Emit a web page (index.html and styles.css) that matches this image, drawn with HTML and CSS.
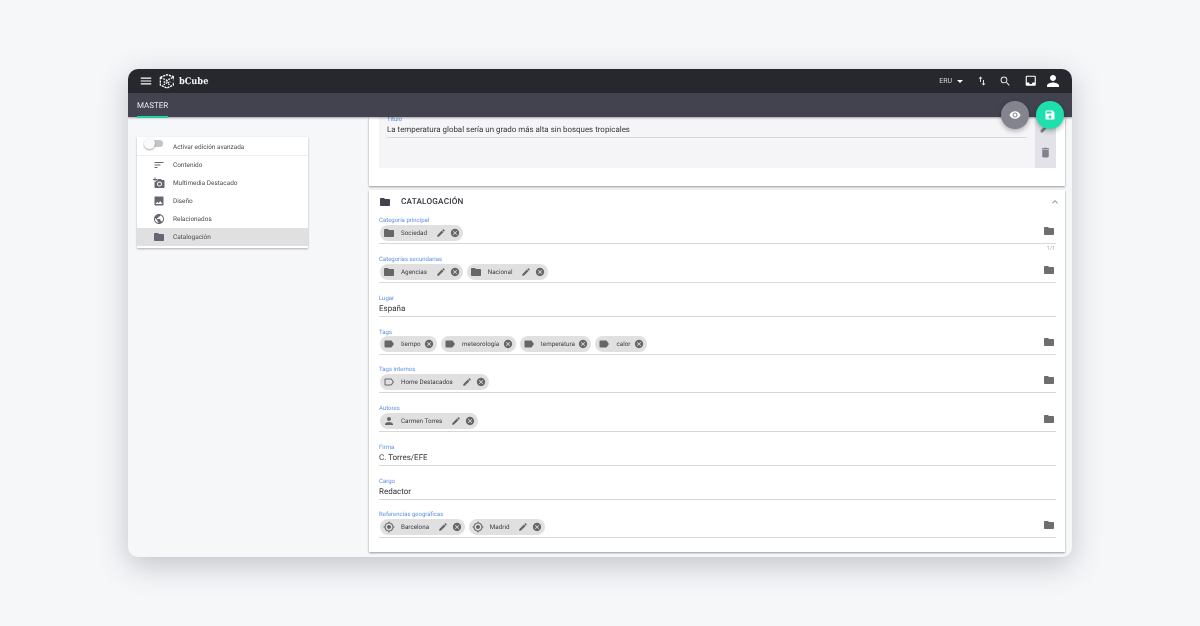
FILE: index.html
```html
<!DOCTYPE html>
<html lang="es">
<head>
    <meta charset="UTF-8">
    <meta name="viewport" content="width=device-width, initial-scale=1.0">
    <title>bCube</title>
    <link rel="stylesheet" href="styles.css">
</head>
<body>
    <svg class="defs" width="0" height="0">
        <symbol id="i-folder" viewBox="0 0 24 24"><path d="M10 4H4c-1.1 0-2 .9-2 2v12c0 1.1.9 2 2 2h16c1.1 0 2-.9 2-2V8c0-1.1-.9-2-2-2h-8l-2-2z"/></symbol>
        <symbol id="i-edit" viewBox="0 0 24 24"><path d="M3 17.25V21h3.75L17.81 9.94l-3.75-3.75L3 17.25zM20.71 7.04a1 1 0 0 0 0-1.41l-2.34-2.34a1 1 0 0 0-1.41 0l-1.83 1.83 3.75 3.75 1.83-1.83z"/></symbol>
        <symbol id="i-cancel" viewBox="0 0 24 24"><path d="M12 2C6.47 2 2 6.47 2 12s4.47 10 10 10 10-4.47 10-10S17.53 2 12 2zm5 13.59L15.59 17 12 13.41 8.41 17 7 15.59 10.59 12 7 8.41 8.41 7 12 10.59 15.59 7 17 8.41 13.41 12 17 15.59z"/></symbol>
        <symbol id="i-label" viewBox="0 0 24 24"><path d="M17.63 5.84C17.27 5.33 16.67 5 16 5L5 5.01C3.9 5.01 3 5.9 3 7v10c0 1.1.9 1.99 2 1.99L16 19c.67 0 1.27-.33 1.63-.84L22 12l-4.37-6.16z"/></symbol>
        <symbol id="i-label-o" viewBox="0 0 24 24"><path d="M17.63 5.84C17.27 5.33 16.67 5 16 5L5 5.01C3.9 5.01 3 5.9 3 7v10c0 1.1.9 1.99 2 1.99L16 19c.67 0 1.27-.33 1.63-.84L22 12l-4.37-6.16zM16 17H5V7h11l3.55 5L16 17z"/></symbol>
        <symbol id="i-person" viewBox="0 0 24 24"><path d="M12 12c2.21 0 4-1.79 4-4s-1.79-4-4-4-4 1.79-4 4 1.79 4 4 4zm0 2c-2.67 0-8 1.34-8 4v2h16v-2c0-2.66-5.33-4-8-4z"/></symbol>
        <symbol id="i-place" viewBox="0 0 24 24"><path d="M12 8c-2.21 0-4 1.79-4 4s1.79 4 4 4 4-1.79 4-4-1.79-4-4-4zm8.94 3A8.99 8.99 0 0 0 13 3.06V1h-2v2.06A8.99 8.99 0 0 0 3.06 11H1v2h2.06A8.99 8.99 0 0 0 11 20.94V23h2v-2.06A8.99 8.99 0 0 0 20.94 13H23v-2h-2.06zM12 19c-3.87 0-7-3.13-7-7s3.13-7 7-7 7 3.13 7 7-3.13 7-7 7z"/></symbol>
    </svg>

    <div class="window">
        <header class="toolbar">
            <svg class="tool-icon menu" viewBox="0 0 24 24"><path d="M3 18h18v-2H3v2zm0-5h18v-2H3v2zm0-7v2h18V6H3z"/></svg>
            <svg class="logo" viewBox="0 0 24 24">
                <path d="M2 6.5l10-4 10 3" stroke-dasharray="3.4 1.2"/>
                <path d="M2 6.5V18l10 4.5 9.5-4.5v-4" stroke-dasharray="3.4 1.2"/>
                <path d="M2.5 7l9.5 4 9.5-5v5" stroke-dasharray="2.6 1.6"/>
                <path d="M12 11v4M7 13l5 2.5 5-2.5M7 17.5l3-1.5M14.5 16l1 3" stroke-dasharray="2.2 1.2"/>
            </svg>
            <span class="brand">bCube</span>
            <span class="spacer"></span>
            <span class="lang">ERU</span>
            <svg class="caret" viewBox="0 0 10 5"><path d="M0 0h10L5 5z"/></svg>
            <svg class="tool-icon swap" viewBox="0 0 24 24"><path d="M9 3L5 7h3v7h2V7h3L9 3zm7 14v-7h-2v7h-3l4 4 4-4h-3z"/></svg>
            <svg class="tool-icon search" viewBox="0 0 24 24"><path d="M15.5 14h-.79l-.28-.27A6.47 6.47 0 0 0 16 9.5 6.5 6.5 0 1 0 9.5 16c1.61 0 3.09-.59 4.23-1.57l.27.28v.79l5 4.99L20.49 19l-4.99-5zm-6 0C7.01 14 5 11.99 5 9.5S7.01 5 9.5 5 14 7.01 14 9.5 11.99 14 9.5 14z"/></svg>
            <svg class="tool-icon inbox" viewBox="0 0 24 24"><path d="M19 3H5a2 2 0 0 0-2 2v14c0 1.1.89 2 2 2h14a2 2 0 0 0 2-2V5a2 2 0 0 0-2-2zm0 12h-4c0 1.66-1.35 3-3 3s-3-1.34-3-3H5V5h14v10z"/></svg>
            <svg class="tool-icon user" viewBox="0 0 24 24"><use href="#i-person"/></svg>
        </header>

        <nav class="tabs">
            <span class="tab">MASTER</span>
        </nav>

        <div class="content">
            <aside class="sidebar">
                <div class="side-card">
                    <div class="side-row toggle-row">
                        <span class="switch"><span class="knob"></span></span>
                        <span>Activar edición avanzada</span>
                    </div>
                    <div class="side-row">
                        <svg class="side-icon" viewBox="0 0 24 24"><path d="M3 18h6v-2H3v2zM3 6v2h18V6H3zm0 7h12v-2H3v2z"/></svg>
                        <span>Contenido</span>
                    </div>
                    <div class="side-row">
                        <svg class="side-icon" viewBox="0 0 24 24"><path d="M3 4V1h2v3h3v2H5v3H3V6H0V4h3zm3 6V7h3V4h7l1.83 2H21c1.1 0 2 .9 2 2v12c0 1.1-.9 2-2 2H5c-1.1 0-2-.9-2-2V10h3zm7 9c2.76 0 5-2.24 5-5s-2.24-5-5-5-5 2.24-5 5 2.24 5 5 5zm-3.2-5c0 1.77 1.43 3.2 3.2 3.2s3.2-1.43 3.2-3.2-1.43-3.2-3.2-3.2-3.2 1.43-3.2 3.2z"/></svg>
                        <span>Multimedia Destacado</span>
                    </div>
                    <div class="side-row">
                        <svg class="side-icon" viewBox="0 0 24 24"><path d="M21 19V5c0-1.1-.9-2-2-2H5c-1.1 0-2 .9-2 2v14c0 1.1.9 2 2 2h14c1.1 0 2-.9 2-2zM8.5 13.5l2.5 3.01L14.5 12l4.5 6H5l3.5-4.5z"/></svg>
                        <span>Diseño</span>
                    </div>
                    <div class="side-row">
                        <svg class="side-icon" viewBox="0 0 24 24"><path d="M12 2C6.48 2 2 6.48 2 12s4.48 10 10 10 10-4.48 10-10S17.52 2 12 2zm-1 17.93c-3.95-.49-7-3.85-7-7.93 0-.62.08-1.21.21-1.79L9 15v1c0 1.1.9 2 2 2v1.93zm6.9-2.54c-.26-.81-1-1.39-1.9-1.39h-1v-3c0-.55-.45-1-1-1H8v-2h2c.55 0 1-.45 1-1V7h2c1.1 0 2-.9 2-2v-.41c2.93 1.19 5 4.06 5 7.41 0 2.08-.8 3.97-2.1 5.39z"/></svg>
                        <span>Relacionados</span>
                    </div>
                    <div class="side-row active">
                        <svg class="side-icon"><use href="#i-folder"/></svg>
                        <span>Catalogación</span>
                    </div>
                </div>
            </aside>

            <main class="main">
                <section class="card title-card">
                    <div class="title-box">
                        <div class="title-field">
                            <label class="field-label">Título</label>
                            <div class="field-value">La temperatura global sería un grado más alta sin bosques tropicales</div>
                        </div>
                        <div class="title-actions">
                            <svg class="action-icon"><use href="#i-edit"/></svg>
                            <svg class="action-icon" viewBox="0 0 24 24"><path d="M6 19c0 1.1.9 2 2 2h8c1.1 0 2-.9 2-2V7H6v12zM19 4h-3.5l-1-1h-5l-1 1H5v2h14V4z"/></svg>
                        </div>
                    </div>
                </section>

                <section class="card">
                    <div class="card-head">
                        <svg class="head-icon"><use href="#i-folder"/></svg>
                        <h2>CATALOGACIÓN</h2>
                        <svg class="chevron" viewBox="0 0 24 24"><path d="M7.41 15.41L12 10.83l4.59 4.58L18 14l-6-6-6 6z"/></svg>
                    </div>

                    <div class="field">
                        <label class="field-label">Categoría principal</label>
                        <div class="chip-row">
                            <span class="chip"><svg class="chip-icon"><use href="#i-folder"/></svg>Sociedad<svg class="chip-edit"><use href="#i-edit"/></svg><svg class="chip-x"><use href="#i-cancel"/></svg></span>
                            <svg class="row-folder"><use href="#i-folder"/></svg>
                        </div>
                        <span class="counter">1/1</span>
                    </div>

                    <div class="field">
                        <label class="field-label">Categorías secundarias</label>
                        <div class="chip-row">
                            <span class="chip"><svg class="chip-icon"><use href="#i-folder"/></svg>Agencias<svg class="chip-edit"><use href="#i-edit"/></svg><svg class="chip-x"><use href="#i-cancel"/></svg></span>
                            <span class="chip"><svg class="chip-icon"><use href="#i-folder"/></svg>Nacional<svg class="chip-edit"><use href="#i-edit"/></svg><svg class="chip-x"><use href="#i-cancel"/></svg></span>
                            <svg class="row-folder"><use href="#i-folder"/></svg>
                        </div>
                    </div>

                    <div class="field">
                        <label class="field-label">Lugar</label>
                        <div class="field-value">España</div>
                    </div>

                    <div class="field tags-field">
                        <label class="field-label">Tags</label>
                        <div class="chip-row">
                            <span class="chip"><svg class="chip-icon"><use href="#i-label"/></svg>tiempo<svg class="chip-x"><use href="#i-cancel"/></svg></span>
                            <span class="chip"><svg class="chip-icon"><use href="#i-label"/></svg>meteorología<svg class="chip-x"><use href="#i-cancel"/></svg></span>
                            <span class="chip"><svg class="chip-icon"><use href="#i-label"/></svg>temperatura<svg class="chip-x"><use href="#i-cancel"/></svg></span>
                            <span class="chip"><svg class="chip-icon"><use href="#i-label"/></svg>calor<svg class="chip-x"><use href="#i-cancel"/></svg></span>
                            <svg class="row-folder"><use href="#i-folder"/></svg>
                        </div>
                    </div>

                    <div class="field">
                        <label class="field-label">Tags internos</label>
                        <div class="chip-row">
                            <span class="chip"><svg class="chip-icon"><use href="#i-label-o"/></svg>Home Destacados<svg class="chip-edit"><use href="#i-edit"/></svg><svg class="chip-x"><use href="#i-cancel"/></svg></span>
                            <svg class="row-folder"><use href="#i-folder"/></svg>
                        </div>
                    </div>

                    <div class="field">
                        <label class="field-label">Autores</label>
                        <div class="chip-row">
                            <span class="chip"><svg class="chip-icon"><use href="#i-person"/></svg>Carmen Torres<svg class="chip-edit"><use href="#i-edit"/></svg><svg class="chip-x"><use href="#i-cancel"/></svg></span>
                            <svg class="row-folder"><use href="#i-folder"/></svg>
                        </div>
                    </div>

                    <div class="field">
                        <label class="field-label">Firma</label>
                        <div class="field-value">C. Torres/EFE</div>
                    </div>

                    <div class="field cargo-field">
                        <label class="field-label">Cargo</label>
                        <div class="field-value">Redactor</div>
                    </div>

                    <div class="field">
                        <label class="field-label">Referencias geográficas</label>
                        <div class="chip-row">
                            <span class="chip"><svg class="chip-icon"><use href="#i-place"/></svg>Barcelona<svg class="chip-edit"><use href="#i-edit"/></svg><svg class="chip-x"><use href="#i-cancel"/></svg></span>
                            <span class="chip"><svg class="chip-icon"><use href="#i-place"/></svg>Madrid<svg class="chip-edit"><use href="#i-edit"/></svg><svg class="chip-x"><use href="#i-cancel"/></svg></span>
                            <svg class="row-folder"><use href="#i-folder"/></svg>
                        </div>
                    </div>
                </section>
            </main>
        </div>

        <button class="fab fab-preview">
            <svg viewBox="0 0 24 24"><path d="M12 4.5C7 4.5 2.73 7.61 1 12c1.73 4.39 6 7.5 11 7.5s9.27-3.11 11-7.5c-1.73-4.39-6-7.5-11-7.5zM12 17c-2.76 0-5-2.24-5-5s2.24-5 5-5 5 2.24 5 5-2.24 5-5 5zm0-8c-1.66 0-3 1.34-3 3s1.34 3 3 3 3-1.34 3-3-1.34-3-3-3z"/></svg>
        </button>
        <button class="fab fab-save">
            <svg viewBox="0 0 24 24"><path d="M17 3H5a2 2 0 0 0-2 2v14c0 1.1.89 2 2 2h14c1.1 0 2-.9 2-2V7l-4-4zm-5 16c-1.66 0-3-1.34-3-3s1.34-3 3-3 3 1.34 3 3-1.34 3-3 3zm3-10H5V5h10v4z"/></svg>
        </button>
    </div>
</body>
</html>
```

FILE: styles.css
```css
html, body {
    margin: 0;
    height: 100%;
    overflow: hidden;
}
body {
    font-family: Roboto, 'Liberation Sans', sans-serif;
    text-rendering: geometricPrecision;
    background-color: #f6f7f9;
    padding: 69px 128px 0;
    box-sizing: border-box;
}
svg {
    display: block;
    flex: none;
    fill: currentColor;
}
.defs {
    position: absolute;
}
.window {
    position: relative;
    height: 488px;
    background-color: #f6f7f9;
    border-radius: 10px;
    box-shadow: 0 8px 30px rgba(40,40,60,0.25);
    overflow: hidden;
    filter: blur(0.25px);
}

/* barra superior */
.toolbar {
    display: flex;
    align-items: center;
    height: 24px;
    padding: 0 10px 0 11px;
    background-color: #27282e;
    color: white;
}
.tool-icon {
    flex: none;
}
.tool-icon.menu {
    width: 14px;
    height: 14px;
}
.tool-icon.swap {
    width: 12px;
    height: 12px;
    margin-left: 13px;
    color: #e0e0e4;
}
.tool-icon.search {
    width: 12.5px;
    height: 12.5px;
    margin-left: 11px;
    color: #e0e0e4;
}
.tool-icon.inbox {
    width: 13.5px;
    height: 13.5px;
    margin-left: 12px;
}
.tool-icon.user {
    width: 18px;
    height: 18px;
    margin-left: 7px;
}
.logo {
    width: 16px;
    height: 16px;
    margin-left: 6px;
    fill: none;
    stroke: white;
    stroke-width: 2;
}
.brand {
    margin-left: 4px;
    font-family: 'DejaVu Serif Condensed', 'DejaVu Serif', serif;
    font-size: 9.2px;
    font-weight: bold;
    color: #f4f4f4;
}
.spacer {
    flex: 1;
}
.lang {
    font-size: 7px;
    color: #d8d8dc;
}
.caret {
    width: 6px;
    height: 3px;
    margin-left: 5px;
}
.tabs {
    height: 24px;
    padding-left: 9px;
    background-color: #42434f;
    box-shadow: 0 1px 2px rgba(0,0,0,0.35);
    position: relative;
    z-index: 2;
}
.tab {
    display: inline-block;
    width: 31px;
    height: 22px;
    line-height: 23px;
    color: #e6e6ea;
    font-size: 8px;
    border-bottom: 2px solid #20d3a6;
}

.content {
    display: flex;
    height: 440px;
}

/* menu lateral */
.sidebar {
    width: 241px;
    padding: 20px 0 0 9px;
    box-sizing: border-box;
}
.side-card {
    width: 171px;
    padding-bottom: 2px;
    background-color: white;
    box-shadow: 0 1px 2px rgba(0,0,0,0.3);
}
.side-row {
    display: flex;
    align-items: center;
    height: 18px;
    padding-left: 16px;
    font-size: 6.45px;
    color: #4c4c52;
}
.toggle-row {
    height: 19px;
    padding: 2px 0 0 8px;
    border-bottom: 1px solid #efeff1;
    box-sizing: border-box;
}
.switch {
    position: relative;
    width: 18px;
    height: 7px;
    margin: -7px 10px 0 0;
    border-radius: 4px;
    background-color: #c4c4c8;
}
.knob {
    position: absolute;
    left: -1px;
    top: -2px;
    width: 11px;
    height: 11px;
    border-radius: 50%;
    background-color: #fafafa;
    box-shadow: 0 1px 2px rgba(0,0,0,0.35);
}
.side-icon {
    width: 12px;
    height: 12px;
    margin-right: 8px;
    color: #666670;
}
.side-row.active {
    background-color: #e0e0e0;
}

/* columna principal */
.main {
    width: 696px;
}
.card {
    background-color: white;
    box-shadow: 0 1px 2px rgba(0,0,0,0.4);
    margin-bottom: 4px;
    padding: 0 9px 3px 10px;
}
.title-card {
    height: 69px;
    padding-bottom: 0;
    box-sizing: border-box;
}
.title-box {
    display: flex;
    height: 51px;
    background-color: #f5f5f7;
}
.title-field {
    flex: 1;
    margin-top: -2px;
    padding: 0 8px;
}
.title-field .field-value {
    font-size: 7.93px;
}
.title-actions {
    display: flex;
    flex-direction: column;
    align-items: center;
    gap: 12px;
    width: 21px;
    padding-top: 4px;
    box-sizing: border-box;
    background-color: #e2e2e8;
}
.action-icon {
    width: 13px;
    height: 13px;
    color: #80808e;
}
.card-head {
    display: flex;
    align-items: center;
    height: 24px;
    padding-bottom: 2px;
}
.card-head h2 {
    margin: 0;
    flex: 1;
    font-size: 8.2px;
    font-weight: 500;
    color: #33343c;
    letter-spacing: 0.2px;
}
.head-icon {
    width: 12px;
    height: 12px;
    margin-right: 10px;
    color: #42434f;
}
.chevron {
    width: 12px;
    height: 12px;
    margin-right: -5px;
    color: #9a9aa6;
}
.field {
    position: relative;
    margin-bottom: 11px;
}
.field-label {
    display: block;
    height: 8px;
    line-height: 10px;
    font-size: 6px;
    color: #5b8fe0;
}
.field-value {
    height: 14px;
    line-height: 13px;
    font-size: 8px;
    color: #34343a;
    border-bottom: 1px solid #d8d8dc;
}
.cargo-field {
    margin-bottom: 10px;
}
.chip-row {
    display: flex;
    align-items: center;
    gap: 4px;
    height: 18px;
    padding: 0 0 1px 1px;
    border-bottom: 1px solid #d8d8dc;
}
.tags-field {
    margin-bottom: 10px;
}
.tags-field .chip-row {
    height: 15px;
    padding-bottom: 3px;
}
.chip {
    display: flex;
    align-items: center;
    height: 16px;
    padding: 0 3px;
    border-radius: 8px;
    background-color: #e0e0e0;
    font-size: 6.3px;
    color: #3e3e44;
}
.chip-icon {
    width: 12px;
    height: 12px;
    margin-right: 6px;
    color: #666;
}
.chip-edit {
    width: 10px;
    height: 10px;
    margin-left: 8.7px;
    color: #666;
}
.chip-x {
    width: 10px;
    height: 10px;
    margin-left: 4px;
    color: #666;
}
.tags-field .chip-x {
    margin-left: 3.5px;
}
.row-folder {
    width: 12px;
    height: 12px;
    margin: 0 1px 5px auto;
    color: #6e6e6e;
}
.tags-field .row-folder {
    margin-bottom: 3px;
}
.counter {
    position: absolute;
    right: 1px;
    top: 30px;
    font-size: 5.5px;
    color: #a8a8ae;
}

/* botones flotantes */
.fab {
    position: absolute;
    top: 32px;
    display: flex;
    align-items: center;
    justify-content: center;
    width: 28px;
    height: 28px;
    padding: 0;
    border: none;
    border-radius: 50%;
    color: white;
    box-shadow: 0 2px 5px rgba(0,0,0,0.3);
    z-index: 3;
}
.fab svg {
    width: 12px;
    height: 12px;
}
.fab-preview {
    left: 873px;
    background-color: #84848f;
}
.fab-save {
    left: 908px;
    background-color: #1fdfae;
}
```
